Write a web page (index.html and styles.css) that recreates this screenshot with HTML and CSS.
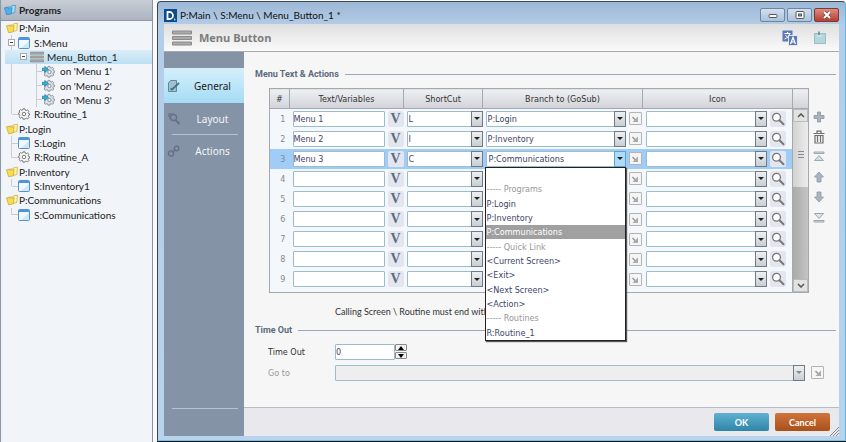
FILE: index.html
```html
<!DOCTYPE html>
<html lang="en">
<head>
    <meta charset="utf-8">
    <title>P:Main \ S:Menu \ Menu_Button_1 *</title>
    <link rel="stylesheet" href="styles.css">
</head>
<body>
    <!-- Shared icons -->
    <svg class="sprite" aria-hidden="true">
        <symbol id="i-folder" viewBox="0 0 14 12">
            <path d="M4 2.500l4 0 1-1.500 4.500-.5-1 8.500L4 11z" fill="#fff3a0" stroke="#c09a30" stroke-width=".7"/>
            <path d="M.5 3.500l3-.7 1 1 5-.5-1 7.200-5.500 1z" fill="#f9dc50" stroke="#c09a30" stroke-width=".7"/>
        </symbol>
        <symbol id="i-folder-blue" viewBox="0 0 14 12">
            <path d="M4 2.500l4 0 1-1.500 4.500-.5-1 8.500L4 11z" fill="#a8dcf8" stroke="#2b7dbb" stroke-width=".7"/>
            <path d="M.5 3.500l3-.7 1 1 5-.5-1 7.200-5.500 1z" fill="#4fb0ea" stroke="#2b7dbb" stroke-width=".7"/>
        </symbol>
        <symbol id="i-screen" viewBox="0 0 12 12">
            <rect x=".5" y=".5" width="11" height="11" rx="1" fill="#eef8ff" stroke="#5a90c4"/>
            <rect x="1" y="1" width="10" height="2" fill="#4d94dc"/>
            <path d="M11 4v7H3z" fill="#cfe8f8"/>
        </symbol>
        <symbol id="i-gear" viewBox="0 0 14 14">
            <path d="M5.800 1h2.400l.4 1.700 1 .4 1.500-.9 1.700 1.700-.9 1.500.4 1 1.200.3v1.600l-1.200.3-.4 1 .9 1.500-1.700 1.700-1.500-.9-1 .4L8.200 13H5.800l-.4-1.700-1-.4-1.500.9-1.700-1.700.9-1.500-.4-1L.5 7.300V6l1.200-.3.4-1-.9-1.200 1.700-1.700 1.500.9 1-.4z" fill="#f4f4f4" stroke="#666"/>
            <circle cx="7" cy="7" r="2" fill="#fff" stroke="#666"/>
        </symbol>
        <symbol id="i-gear-go" viewBox="0 0 14 14">
            <path d="M6.500 1.500h2l.4 1.400 1 .4 1.300-.8 1.400 1.400-.8 1.300.4 1 1.300.3v1.700l-1.300.3-.4 1 .8 1.300-1.400 1.400-1.300-.8-1 .4-.4 1.300h-2l-.4-1.300-1-.4-1.300.8-1.400-1.400.8-1.300-.4-2 .4-2 1.300-2 1.300.2z" fill="#dde2e8" stroke="#7c858e" stroke-width=".9"/>
            <circle cx="8" cy="7.500" r="1.800" fill="#fff" stroke="#7c858e"/>
            <path d="M0 3.500h3v-2l4 3.300-4 3.200V6H0z" fill="#35b0d8" stroke="#1b7398" stroke-width=".7"/>
        </symbol>
        <symbol id="i-bars" viewBox="0 0 20 16">
            <path d="M.5 1h19v3H.5zM.5 6.500h19v3H.5zM.5 12h19v3H.5z" fill="#aaa" stroke="#8a8a8a"/>
        </symbol>
        <symbol id="i-zoom" viewBox="0 0 14 14">
            <circle cx="5.500" cy="5.300" r="3.900" fill="#fff" stroke="#777" stroke-width="1.300"/>
            <path d="M8.500 8.300l4 4" stroke="#777" stroke-width="2" stroke-linecap="round"/>
        </symbol>
        <symbol id="i-goto" viewBox="0 0 12 12">
            <path d="M3.500 4L7 7.500" stroke="#999" stroke-width="1.500"/>
            <path d="M9 3.500V9H3.500z" fill="#aaa"/>
        </symbol>
    </svg>

    <aside class="programs">
        <h2><svg width="12" height="12"><use href="#i-folder-blue"/></svg>Programs</h2>
        <ul class="tree">
            <li class="folder"><svg><use href="#i-folder"/></svg>P:Main</li>
            <li class="screen line"><b class="toggle"></b><svg><use href="#i-screen"/></svg>S:Menu</li>
            <li class="button line selected"><b class="toggle"></b><svg class="wide"><use href="#i-bars"/></svg>Menu_Button_1</li>
            <li class="event line"><i></i><svg><use href="#i-gear-go"/></svg>on 'Menu 1'</li>
            <li class="event line"><i></i><svg><use href="#i-gear-go"/></svg>on 'Menu 2'</li>
            <li class="event line"><i></i><svg><use href="#i-gear-go"/></svg>on 'Menu 3'</li>
            <li class="screen line last"><i></i><svg><use href="#i-gear"/></svg>R:Routine_1</li>
            <li class="folder"><svg><use href="#i-folder"/></svg>P:Login</li>
            <li class="screen line"><i></i><svg><use href="#i-screen"/></svg>S:Login</li>
            <li class="screen line last"><i></i><svg><use href="#i-gear"/></svg>R:Routine_A</li>
            <li class="folder"><svg><use href="#i-folder"/></svg>P:Inventory</li>
            <li class="screen line last"><i></i><svg><use href="#i-screen"/></svg>S:Inventory1</li>
            <li class="folder"><svg><use href="#i-folder"/></svg>P:Communications</li>
            <li class="screen line last"><i></i><svg><use href="#i-screen"/></svg>S:Communications</li>
        </ul>
    </aside>

    <div class="window">
        <div class="titlebar">
            <svg width="13" height="13" viewBox="0 0 13 13"><rect width="13" height="13" fill="#0d4c8c"/><path d="M3.500 3h2a3.500 3.500 0 0 1 0 7h-2z" fill="none" stroke="#fff" stroke-width="1.800"/><path d="M10 9l2 1.500-2 1.500z" fill="#7fd0f5"/></svg>
            <span>P:Main \ S:Menu \ Menu_Button_1 *</span>
            <div class="winbuttons">
                <button aria-label="Minimize"><svg width="10" height="8" viewBox="0 0 10 8"><rect x="1" y="3.500" width="8" height="3" rx="1" fill="#fff" stroke="#555"/></svg></button>
                <button aria-label="Maximize"><svg width="10" height="8" viewBox="0 0 10 8"><rect x="1" y=".5" width="8" height="7" rx="1" fill="#fff" stroke="#555"/><rect x="3.500" y="3" width="3" height="2" fill="#8ab" stroke="#555"/></svg></button>
                <button class="close" aria-label="Close"><svg width="10" height="8" viewBox="0 0 10 8"><path d="M2 1l6 6M8 1L2 7" stroke="#644" stroke-width="3.200"/><path d="M2 1l6 6M8 1L2 7" stroke="#fff" stroke-width="2"/></svg></button>
            </div>
        </div>

        <div class="client">
            <header class="header">
                <svg width="20" height="16"><use href="#i-bars"/></svg>
                <h1>Menu Button</h1>
                <button class="plain" aria-label="Translate"><svg width="16" height="16" viewBox="0 0 16 16"><rect x=".5" y=".5" width="10" height="11" fill="#5b79b4"/><path d="M2.500 3.500h6M5.500 2v1.500M7.500 4c-.6 2.500-2.500 4-5 5M3.500 5c1 2 3 3.500 5 4" stroke="#fff" fill="none"/><rect x="6.500" y="5.500" width="9" height="10" fill="#5b79b4" stroke="#dfe6f2"/><path d="M8.500 14L11 7.500l2.500 6.500M9.500 12h3" stroke="#fff" stroke-width="1.200" fill="none"/></svg></button>
                <button class="plain" aria-label="Note"><svg width="12" height="14" viewBox="0 0 12 14"><rect x=".5" y="2.500" width="11" height="10" fill="#b5d6dc" stroke="#9cbcc6"/><path d="M5 4V.5" stroke="#5d8490" stroke-width="1.500"/><path d="M3 5h5" stroke="#d9edf0"/></svg></button>
            </header>

            <nav class="tabs">
                <a href="#general" class="active"><svg width="14" height="14" viewBox="0 0 14 14"><path d="M1.500 4l2-2.500h6v11h-8z" fill="#9dc3d2" stroke="#5f8a9c"/><path d="M3.500 9.500L5 10.500 12 4" stroke="#4b7486" stroke-width="1.800" fill="none"/></svg><span>General</span></a>
                <a href="#layout"><svg width="14" height="14" viewBox="0 0 14 14"><path d="M1 2h6M1 4h3M3 1v6" stroke="#667080"/><circle cx="6.500" cy="5.500" r="3" fill="none" stroke="#667080" stroke-width="1.300"/><path d="M8.500 8l4 4" stroke="#667080" stroke-width="2"/></svg><span>Layout</span></a>
                <hr>
                <a href="#actions"><svg width="14" height="14" viewBox="0 0 14 14"><circle cx="4" cy="9.500" r="2.600" fill="none" stroke="#667080" stroke-width="1.300"/><circle cx="9.500" cy="4.500" r="2.300" fill="none" stroke="#667080" stroke-width="1.300"/><path d="M5 8.500l4-3" stroke="#667080" stroke-width="1.300"/></svg><span>Actions</span></a>
                <hr class="bottom">
            </nav>

            <main class="content">
                <h3>Menu Text &amp; Actions</h3>
                <div class="grid-area">
                    <table class="grid">
                        <colgroup><col class="c-num"><col class="c-text"><col class="c-short"><col class="c-branch"><col><col class="c-scroll"></colgroup>
                        <thead>
                            <tr><th>#</th><th>Text/Variables</th><th>ShortCut</th><th>Branch to (GoSub)</th><th>Icon</th><th></th></tr>
                        </thead>
                        <tbody id="rows"></tbody>
                    </table>
                    <div class="tools">
                        <button class="plain" aria-label="Add row"><svg width="12" height="12" viewBox="0 0 12 12"><path d="M4.500 1h3v3.500H11v3H7.500V11h-3V7.500H1v-3h3.500z" fill="#a9b6c0" stroke="#8795a1" stroke-width=".8"/></svg></button>
                        <button class="plain" aria-label="Delete row"><svg width="12" height="14" viewBox="0 0 12 14"><path d="M.5 3.500h11M4 3V1.200h4V3M2 5.500h8V13H2zM4.500 6v6M7.500 6v6" fill="none" stroke="#6e6e6e" stroke-width="1.200"/></svg></button>
                        <button class="plain" aria-label="Move to top"><svg width="12" height="12" viewBox="0 0 12 12"><path d="M1 1h10v1.500H1zM6 4.500l4.500 5h-9z" fill="#d5dce4" stroke="#93a2b0" stroke-width=".9"/></svg></button>
                        <button class="plain" aria-label="Move up"><svg width="12" height="12" viewBox="0 0 12 12"><path d="M6 1l4.500 5H8v5H4V6H1.500z" fill="#a9b4c2" stroke="#8d99a8" stroke-width=".8"/></svg></button>
                        <button class="plain" aria-label="Move down"><svg width="12" height="12" viewBox="0 0 12 12"><path d="M6 11l4.500-5H8V1H4v5H1.500z" fill="#a9b4c2" stroke="#8d99a8" stroke-width=".8"/></svg></button>
                        <button class="plain" aria-label="Move to bottom"><svg width="12" height="12" viewBox="0 0 12 12"><path d="M1 9.500h10V11H1zM6 7.500l4.500-5h-9z" fill="#dfe3e7" stroke="#939ca5" stroke-width=".9"/></svg></button>
                    </div>
                </div>
                <p class="hint">Calling Screen \ Routine must end with</p>

                <h3>Time Out</h3>
                <div class="field">
                    <label for="timeout">Time Out</label>
                    <input type="text" id="timeout" value="0">
                    <span class="spinner">
                        <button aria-label="Increase"><svg width="6" height="4" viewBox="0 0 6 4"><path d="M3 0l3 4H0z"/></svg></button>
                        <button aria-label="Decrease"><svg width="6" height="4" viewBox="0 0 6 4"><path d="M3 4l3-4H0z"/></svg></button>
                    </span>
                </div>
                <div class="field disabled">
                    <label for="goto">Go to</label>
                    <span class="combo"><select id="goto" disabled><option></option></select><span class="arrow"></span></span>
                    <button class="goto" aria-label="Open screen" disabled><svg width="12" height="12"><use href="#i-goto"/></svg></button>
                </div>
            </main>

            <footer class="footer">
                <button class="ok">OK</button>
                <button class="cancel">Cancel</button>
                <svg class="grip" width="9" height="9" viewBox="0 0 9 9"><path d="M0 9l9-9M3 9l6-6M6 9l3-3" stroke="#888"/></svg>
            </footer>
        </div>
    </div>

    <script src="script.js"></script>
</body>
</html>
```
FILE: styles.css
```css
* {
    box-sizing: border-box;
}
body {
    margin: 0;
    display: flex;
    height: 100vh;
    overflow: hidden;
    background: #f8fafc;
    font-family: "DejaVu Sans Condensed", "Noto Sans", sans-serif;
    font-size: 9px;
    color: #333;
}
button, input, select {
    font: inherit;
    color: inherit;
    margin: 0;
    padding: 0;
}
h1, h2, h3, p, ul {
    margin: 0;
    padding: 0;
}
svg {
    display: block;
    flex: none;
}
.sprite {
    display: none;
}
.plain {
    border: 0;
    background: none;
}

/* Programs tree */
.programs {
    flex: none;
    width: 153px;
    background: #f1f4f8;
    border-left: 1px solid #8c98a8;
    border-right: 1px solid #8b939d;
    font-family: Lato, sans-serif;
    font-size: 10px;
}
.programs h2 {
    display: flex;
    align-items: center;
    gap: 3px;
    height: 21px;
    padding-left: 3px;
    background: linear-gradient(#c9ced6, #adb4c0);
    border-bottom: 1px solid #8d97a5;
    font-size: 10px;
    font-weight: bold;
    color: #222;
}
.tree {
    display: grid;
    grid-auto-rows: 1fr;
    height: 201px;
    list-style: none;
}
.tree li {
    display: flex;
    align-items: center;
    white-space: nowrap;
    color: #222;
}
.tree svg {
    width: 12px;
    height: 12px;
}
.tree svg.wide {
    width: 14px;
    margin-right: 3px;
}
.tree .folder {
    padding-left: 5px;
    gap: 1px;
}
.tree .line {
    padding-left: 7px;
    background: linear-gradient(#c9ccd0, #c9ccd0) 10px 0 / 1px 100% no-repeat;
}
.tree .last {
    background-size: 1px 50%;
}
.tree .screen svg {
    margin-right: 4px;
}
.tree i {
    width: 6px;
    height: 1px;
    margin-left: 4px;
    background: #c9ccd0;
}
.toggle {
    width: 7px;
    height: 7px;
    margin-right: 3px;
    border: 1px solid #aaa;
    background: linear-gradient(#444, #444) 1px 2px / 3px 1px no-repeat #fff;
}
.tree .selected {
    margin-left: 4px;
    padding-left: 15px;
    background: linear-gradient(#dcedf8, #bcdff2);
}
.tree .event {
    padding-left: 31px;
    background: linear-gradient(#c9ccd0, #c9ccd0) 10px 0 / 1px 100% no-repeat, linear-gradient(#c9ccd0, #c9ccd0) 35px 0 / 1px 100% no-repeat;
}
.tree .event svg {
    width: 13px;
    height: 13px;
    margin-right: 5px;
}

/* Window */
.window {
    flex: 1;
    display: flex;
    flex-direction: column;
    margin: 1px 0 1px 4px;
    padding: 0 6px 4px;
    border: 1px solid #3c4650;
    border-right-color: #5bb6e0;
    border-bottom-color: #6fc4ea;
    border-radius: 4px 4px 0 0;
    background: linear-gradient(#9db8d6, #b4cde8 24px, #b8d3ee);
    box-shadow: 0 1px #111;
}
.titlebar {
    display: flex;
    align-items: center;
    gap: 3px;
    height: 22px;
    padding-top: 4px;
    font-family: Lato, sans-serif;
    font-size: 10px;
    color: #111;
}
.winbuttons {
    display: flex;
    gap: 2px;
    margin-left: auto;
}
.winbuttons button {
    display: flex;
    align-items: center;
    justify-content: center;
    width: 25px;
    height: 14px;
    border: 1px solid #71869e;
    border-radius: 2px;
    background: linear-gradient(#d3e0ef, #a9c2dc);
}
.winbuttons .close {
    border-color: #7c3a3a;
    background: linear-gradient(#dd8d80, #b93d2c);
}
.client {
    flex: 1;
    display: grid;
    grid-template: 28px 1fr 29px / 80px 1fr;
    background: #f6f6f7;
}
.header {
    grid-column: 1 / 3;
    display: flex;
    align-items: center;
    gap: 16px;
    padding: 0 13px 0 8px;
    border-bottom: 1px solid #a9a9a9;
    background: linear-gradient(#dfdfe0, #fafafa);
}
.header h1 {
    flex: 1;
    margin-left: -9px;
    font-family: "Open Sans", sans-serif;
    font-size: 11px;
    color: #7c7c7c;
}

/* Side tabs */
.tabs {
    grid-row: 2 / 4;
    display: flex;
    flex-direction: column;
    padding: 16px 0 27px;
    background: #8493a6;
}
.tabs a {
    display: flex;
    align-items: center;
    height: 31px;
    padding-left: 3px;
    color: #f4f6f8;
    font-family: "Noto Sans", sans-serif;
    font-size: 10px;
    text-decoration: none;
}
.tabs a span {
    flex: 1;
    text-align: center;
}
.tabs .active {
    height: 35px;
    color: #222;
    background: linear-gradient(#d5effb, #a5dcf5);
}
.tabs hr {
    width: 66px;
    margin: 0 0 0 8px;
    border: 0;
    border-top: 1px solid #b9c2cd;
}
.tabs .bottom {
    margin-top: auto;
}

/* Content */
.content {
    padding: 14px 3px 0 11px;
}
.content h3 {
    display: flex;
    align-items: center;
    gap: 6px;
    height: 16px;
    color: #5c6b7c;
    font-family: Roboto, sans-serif;
    font-size: 9px;
}
.content h3::after {
    content: "";
    flex: 1;
    border-top: 1px solid #9aa8b8;
}
.grid-area {
    display: flex;
    margin: 6px 7px 0 14px;
}
.grid {
    flex: 1;
    table-layout: fixed;
    border-collapse: collapse;
    border: 1px solid #a5a9ad;
    background: #f4f8fc;
}
.c-num { width: 20px; }
.c-text { width: 111px; }
.c-short { width: 79px; }
.c-branch { width: 160px; }
.c-scroll { width: 16px; }
.grid th {
    height: 20px;
    padding: 0;
    border: 1px solid #a5a9ad;
    background: linear-gradient(#eff0f3, #d2d3d9);
    font-weight: normal;
}
.grid td {
    height: 20px;
    padding: 0 0 0 3px;
}
.grid td.num {
    padding: 0 4px 0 0;
    text-align: right;
    color: #888;
}
.grid .current td:not(.scroll) {
    background: #9fcdf8;
}
.grid .spacer td {
    height: 3px;
}
.cell {
    display: flex;
    align-items: center;
    gap: 3px;
    position: relative;
}
input[type="text"], select {
    height: 16px;
    border: 1px solid #9dbccb;
    border-radius: 1px;
    background: #fff;
    color: #3c4668;
}
.cell input {
    width: 92px;
}
.cell button {
    flex: none;
    display: flex;
    align-items: center;
    justify-content: center;
    width: 16px;
    height: 16px;
    border: 0;
    border-radius: 2px;
    background: #e4e6ef;
}
.cell .var {
    font-family: "Liberation Serif", serif;
    font-size: 14px;
    font-weight: bold;
    color: #5c6c80;
}
.combo {
    flex: 1;
    display: grid;
}
.combo select, .combo .arrow {
    grid-area: 1 / 1;
}
select {
    width: 100%;
    padding-left: 1px;
    appearance: none;
}
select:disabled {
    opacity: 1;
}
.combo .arrow {
    justify-self: end;
    display: grid;
    place-items: center;
    width: 12px;
    height: 16px;
    border: 1px solid #707b86;
    background: linear-gradient(#eef0f2, #c8ced4);
    pointer-events: none;
    z-index: 1;
}
.arrow::after {
    content: "";
    border: 3px solid transparent;
    border-top-color: #222;
    border-bottom: 0;
}
.open select {
    padding-left: 2px;
}
.open .arrow {
    border-color: #5ba4cf;
    background: #aedcf6;
}
.branch .combo {
    flex: none;
    width: 140px;
}
.cell .goto, .field .goto {
    display: grid;
    place-items: center;
    width: 13px;
    height: 13px;
    border: 1px solid #b3b3b3;
    border-radius: 1px;
    background: #f5f5f5;
}
.icon {
    padding-right: 6px;
}

/* Opened branch list */
.options {
    position: absolute;
    top: 16px;
    left: -1px;
    z-index: 2;
    display: grid;
    grid-auto-rows: 1fr;
    width: 141px;
    height: 174px;
    list-style: none;
    border: 1px solid #222;
    background: #fff;
    box-shadow: 1px 1px 1px #555;
    color: #3c4668;
}
.options li {
    display: flex;
    align-items: center;
    padding-left: 1px;
}
.options .group {
    color: #999;
}
.options .chosen {
    background: #a0a0a0;
    color: #fff;
}

/* Scroll bar */
.grid td.scroll {
    height: 1px;
    padding: 0;
    border-left: 1px solid #a5a9ad;
}
.bar {
    display: grid;
    grid-template-rows: 13px 65px 1fr 13px;
    height: 183px;
    background: linear-gradient(90deg, #aaa, #c4c4c4);
}
.bar span {
    display: grid;
    place-items: center;
}
.bar .end {
    background: #e2e2e2;
    border: 1px solid #bbb;
}
.bar .thumb {
    background: linear-gradient(90deg, #d2d2d2, #ececec);
}
.tools {
    display: flex;
    flex-direction: column;
    width: 20px;
    padding-top: 19px;
}
.tools button {
    display: grid;
    place-items: center;
    height: 20px;
}

.hint {
    height: 29px;
    padding: 11px 0 0 80px;
    font-family: Lato, sans-serif;
    line-height: 16px;
    white-space: nowrap;
}
.field {
    display: flex;
    align-items: center;
    height: 21px;
    padding: 0 12px 0 13px;
}
.hint + h3 + .field {
    margin-top: 3px;
}
.field label {
    width: 67px;
}
.field input {
    width: 60px;
}
.spinner {
    display: grid;
    gap: 1px;
}
.spinner button {
    display: grid;
    place-items: center;
    width: 12px;
    height: 7px;
    border: 1px solid #888;
    border-radius: 1px;
    background: #f2f2f2;
}
.disabled label {
    color: #999;
}
.disabled select {
    background: #eee;
}
.disabled .arrow::after {
    border-top-color: #888;
}
.disabled .goto {
    margin-left: 6px;
}

.footer {
    display: flex;
    align-items: center;
    gap: 6px;
    justify-content: flex-end;
    border-top: 1px solid #b4bcc6;
    background: #e9e9ed;
}
.footer button {
    width: 55px;
    height: 18px;
    border: 0;
    border-radius: 2px;
    color: #fff;
    font-family: Lato, sans-serif;
    font-size: 9px;
    font-weight: bold;
}
.footer .ok {
    background: linear-gradient(#5fb1cf, #2f84a8);
}
.footer .cancel {
    background: linear-gradient(#d0743a, #a94f1a);
}
.grip {
    align-self: flex-end;
    margin-left: -6px;
}
```
FILE: script.js
```js
const menuRows = [
    { text: 'Menu 1', key: 'L', branch: 'P:Login' },
    { text: 'Menu 2', key: 'I', branch: 'P:Inventory' },
    { text: 'Menu 3', key: 'C', branch: 'P:Communications', current: true },
    {}, {}, {}, {}, {}, {}
];

// Entries of the branch list; groups are not selectable
const branchOptions = [
    { label: '' },
    { label: '----- Programs', group: true },
    { label: 'P:Login' },
    { label: 'P:Inventory' },
    { label: 'P:Communications' },
    { label: '----- Quick Link', group: true },
    { label: '<Current Screen>' },
    { label: '<Exit>' },
    { label: '<Next Screen>' },
    { label: '<Action>' },
    { label: '----- Routines', group: true },
    { label: 'R:Routine_1' }
];

function escapeHtml(s) {
    return s.replace(/</g, '&lt;').replace(/>/g, '&gt;');
}

function combo(label, value) {
    return `<span class="combo"><select aria-label="${label}"><option>${value || ''}</option></select><span class="arrow"></span></span>`;
}

function optionList(selected) {
    const items = branchOptions.map(o => {
        const cls = o.group ? 'group' : (o.label === selected ? 'chosen' : '');
        return `<li class="${cls}">${escapeHtml(o.label)}</li>`;
    });
    return `<ul class="options">${items.join('')}</ul>`;
}

const scrollBar = `
    <td class="scroll" rowspan="10"><div class="bar">
        <span class="end"><svg width="8" height="5" viewBox="0 0 8 5"><path d="M1 4l3-3 3 3" fill="none" stroke="#555" stroke-width="1.500"/></svg></span>
        <span class="thumb"><svg width="6" height="7" viewBox="0 0 6 7"><path d="M0 .5h6M0 3.500h6M0 6.500h6" stroke="#888"/></svg></span>
        <span></span>
        <span class="end"><svg width="8" height="5" viewBox="0 0 8 5"><path d="M1 1l3 3 3-3" fill="none" stroke="#555" stroke-width="1.500"/></svg></span>
    </div></td>`;

document.getElementById('rows').innerHTML = menuRows.map((row, i) => {
    const n = i + 1;
    return `
    <tr class="${row.current ? 'current' : ''}">
        <td class="num">${n}</td>
        <td><div class="cell"><input type="text" aria-label="Text ${n}" value="${row.text || ''}"><button class="var" aria-label="Variable ${n}">V</button></div></td>
        <td><div class="cell">${combo('Shortcut ' + n, row.key)}</div></td>
        <td><div class="cell branch ${row.current ? 'open' : ''}">${combo('Branch ' + n, row.branch)}<button class="goto" aria-label="Open branch ${n}"><svg width="12" height="12"><use href="#i-goto"/></svg></button>${row.current ? optionList(row.branch) : ''}</div></td>
        <td><div class="cell icon">${combo('Icon ' + n)}<button aria-label="Browse icon ${n}"><svg width="14" height="14"><use href="#i-zoom"/></svg></button></div></td>
        ${i === 0 ? scrollBar : ''}
    </tr>`;
}).join('') + '<tr class="spacer"><td colspan="5"></td></tr>';
```
